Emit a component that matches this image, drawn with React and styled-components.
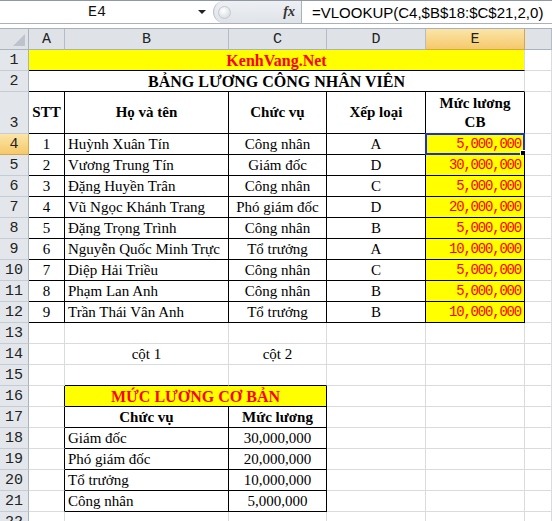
import styled, { createGlobalStyle } from "styled-components";

const GlobalStyle = createGlobalStyle`
  body {
    margin: 0;
    background: #fff;
    font-family: "Liberation Serif", serif;
    overflow: hidden;
  }
`;

const COLS = "29px 36px 164px 98px 99px 99px 1fr";
const GRID = "#d9dbde";

const Page = styled.div`
  width: 552px;
  height: 521px;
  overflow: hidden;
`;

const FormulaBar = styled.div`
  height: 24px;
  box-sizing: border-box;
  display: flex;
  align-items: stretch;
  border-top: 1px solid #8f98a3;
  border-bottom: 1px solid #a9b1bb;
  background: #fff;
`;

const NameBox = styled.div`
  width: 213px;
  display: flex;
  align-items: center;
  font-family: "Liberation Mono", monospace;
  font-size: 15px;
  color: #111;
`;

const NameText = styled.span`
  flex: 1;
  text-align: center;
  padding-right: 4px;
`;

const DropArrow = styled.span`
  width: 0;
  height: 0;
  margin-right: 7px;
  border-left: 4px solid transparent;
  border-right: 4px solid transparent;
  border-top: 4px solid #222;
`;

const FxZone = styled.div`
  width: 89px;
  display: flex;
  align-items: center;
  justify-content: flex-end;
  padding-right: 6px;
  box-sizing: border-box;
  background: linear-gradient(#eef0f3, #dfe3e8);
  border-radius: 12px 0 0 12px;
  border-right: 1px solid #a9b1bb;
  border-left: 1px solid #b9c0c8;
  position: relative;
`;

const Knob = styled.span`
  position: absolute;
  left: 4px;
  top: 5px;
  width: 11px;
  height: 11px;
  border-radius: 50%;
  background: radial-gradient(circle at 40% 35%, #fff, #cfd4da);
  border: 1px solid #c3c9d0;
`;

const Fx = styled.span`
  font-family: "Liberation Serif", serif;
  font-style: italic;
  font-weight: bold;
  font-size: 14px;
  color: #333;
`;

const Formula = styled.div`
  flex: 1;
  display: flex;
  align-items: center;
  padding-left: 10px;
  font-family: "Liberation Sans", sans-serif;
  font-size: 15px;
  color: #000;
  white-space: nowrap;
`;

const Strip = styled.div`
  height: 5px;
  box-sizing: border-box;
  background: #fff;
  border-bottom: 1px solid #a9b1bb;
`;

const Row = styled.div`
  display: grid;
  grid-template-columns: ${COLS};
  height: ${(p) => p.$h || 21}px;
`;

const Corner = styled.div`
  box-sizing: border-box;
  background: #dfe3e8;
  border-right: 1px solid #a9b3be;
  border-bottom: 1px solid #a9b3be;
  position: relative;
  &::after {
    content: "";
    position: absolute;
    right: 3px;
    bottom: 3px;
    border-left: 12px solid transparent;
    border-bottom: 12px solid #bcc3cb;
  }
`;

const ColHead = styled.div`
  box-sizing: border-box;
  display: flex;
  align-items: center;
  justify-content: center;
  font-family: "Liberation Mono", monospace;
  font-size: 15px;
  color: #222;
  background: ${(p) =>
    p.$sel ? "linear-gradient(#fbe5a8, #f5c96a)" : "#dfe3e8"};
  border-right: 1px solid ${(p) => (p.$sel ? "#d9a44e" : "#b4bdc7")};
  border-bottom: 1px solid ${(p) => (p.$sel ? "#d9a44e" : "#a9b3be")};
`;

const RowHead = styled.div`
  box-sizing: border-box;
  display: flex;
  align-items: flex-end;
  justify-content: center;
  padding-bottom: 1px;
  font-family: "Liberation Mono", monospace;
  font-size: 15px;
  color: #222;
  overflow: hidden;
  background: ${(p) =>
    p.$sel ? "linear-gradient(#fbe5a8, #f5c96a)" : "#e3e7ec"};
  border-right: 1px solid ${(p) => (p.$sel ? "#d9a44e" : "#a9b3be")};
  border-bottom: 1px solid ${(p) => (p.$sel ? "#d9a44e" : "#c5ccd4")};
`;

const Cell = styled.div`
  grid-column: span ${(p) => p.$span || 1};
  box-sizing: border-box;
  position: relative;
  display: flex;
  flex-direction: column;
  justify-content: center;
  align-items: ${(p) =>
    p.$align === "left" ? "flex-start" : p.$align === "right" ? "flex-end" : "center"};
  text-align: center;
  padding: 0 3px;
  white-space: nowrap;
  overflow: ${(p) => (p.$sel ? "visible" : "hidden")};
  font-family: ${(p) =>
    p.$mono ? '"Liberation Mono", monospace' : '"Liberation Serif", serif'};
  font-size: ${(p) => (p.$mono ? 14 : p.$title ? 16 : 15)}px;
  letter-spacing: ${(p) => (p.$mono ? "-1.2px" : "normal")};
  line-height: 19px;
  font-weight: ${(p) => (p.$bold ? "bold" : "normal")};
  color: ${(p) => (p.$red ? "#ff0000" : "#000")};
  background: ${(p) => (p.$yellow ? "#ffff00" : "#fff")};
  border-right: 1px solid ${(p) => (p.$br ? "#000" : GRID)};
  border-bottom: 1px solid ${(p) => (p.$bb ? "#000" : GRID)};
`;

const Selection = styled.div`
  position: absolute;
  left: -1px;
  top: -1px;
  right: -1px;
  bottom: -1px;
  border: 2px solid #1d2fd6;
  pointer-events: none;
  &::after {
    content: "";
    position: absolute;
    right: -4px;
    bottom: -4px;
    width: 5px;
    height: 5px;
    background: #000;
    border: 1px solid #fff;
  }
`;

const staff = [
  ["1", "Huỳnh Xuân Tín", "Công nhân", "A", "5,000,000"],
  ["2", "Vương Trung Tín", "Giám đốc", "D", "30,000,000"],
  ["3", "Đặng Huyền Trân", "Công nhân", "C", "5,000,000"],
  ["4", "Vũ Ngọc Khánh Trang", "Phó giám đốc", "D", "20,000,000"],
  ["5", "Đặng Trọng Trình", "Công nhân", "B", "5,000,000"],
  ["6", "Nguyễn Quốc Minh Trực", "Tổ trưởng", "A", "10,000,000"],
  ["7", "Diệp Hải Triều", "Công nhân", "C", "5,000,000"],
  ["8", "Phạm Lan Anh", "Công nhân", "B", "5,000,000"],
  ["9", "Trần Thái Vân Anh", "Tổ trưởng", "B", "10,000,000"],
];

const salary = [
  ["Giám đốc", "30,000,000"],
  ["Phó giám đốc", "20,000,000"],
  ["Tổ trưởng", "10,000,000"],
  ["Công nhân", "5,000,000"],
];

const Blank = ({ n = 1, ...rest }) =>
  Array.from({ length: n }, (_, i) => <Cell key={"b" + i} {...rest} />);

export default function App() {
  return (
    <Page>
      <GlobalStyle />
      <FormulaBar>
        <NameBox>
          <NameText>E4</NameText>
          <DropArrow />
        </NameBox>
        <FxZone>
          <Knob />
          <Fx>fx</Fx>
        </FxZone>
        <Formula>=VLOOKUP(C4,$B$18:$C$21,2,0)</Formula>
      </FormulaBar>
      <Strip />

      <Row>
        <Corner />
        {["A", "B", "C", "D", "E", "F"].map((c) => (
          <ColHead key={c} $sel={c === "E"}>
            {c === "F" ? "" : c}
          </ColHead>
        ))}
      </Row>

      <Row>
        <RowHead>1</RowHead>
        <Cell $span={5} $yellow $red $bold $title $bb>
          KenhVang.Net
        </Cell>
        <Cell />
      </Row>

      <Row>
        <RowHead>2</RowHead>
        <Cell $span={5} $bold $title $bb>
          BẢNG LƯƠNG CÔNG NHÂN VIÊN
        </Cell>
        <Cell />
      </Row>

      <Row $h={42}>
        <RowHead>3</RowHead>
        <Cell $bold $br $bb>STT</Cell>
        <Cell $bold $br $bb>Họ và tên</Cell>
        <Cell $bold $br $bb>Chức vụ</Cell>
        <Cell $bold $br $bb>Xếp loại</Cell>
        <Cell $bold $br $bb>
          <span>Mức lương</span>
          <span>CB</span>
        </Cell>
        <Cell />
      </Row>

      {staff.map((r, i) => (
        <Row key={r[0]}>
          <RowHead $sel={i === 0}>{i + 4}</RowHead>
          <Cell $br $bb>{r[0]}</Cell>
          <Cell $br $bb $align="left">{r[1]}</Cell>
          <Cell $br $bb>{r[2]}</Cell>
          <Cell $br $bb>{r[3]}</Cell>
          <Cell $br $bb $yellow $red $mono $align="right" $sel={i === 0}>
            {r[4]}
            {i === 0 && <Selection />}
          </Cell>
          <Cell />
        </Row>
      ))}

      <Row>
        <RowHead>13</RowHead>
        <Blank n={6} />
      </Row>

      <Row>
        <RowHead>14</RowHead>
        <Cell />
        <Cell>cột 1</Cell>
        <Cell>cột 2</Cell>
        <Blank n={3} />
      </Row>

      <Row>
        <RowHead>15</RowHead>
        <Cell />
        <Blank n={2} $bb />
        <Blank n={3} />
      </Row>

      <Row>
        <RowHead>16</RowHead>
        <Cell $br />
        <Cell $span={2} $yellow $red $bold $title $br $bb>
          MỨC LƯƠNG CƠ BẢN
        </Cell>
        <Blank n={3} />
      </Row>

      <Row>
        <RowHead>17</RowHead>
        <Cell $br />
        <Cell $bold $br $bb>Chức vụ</Cell>
        <Cell $bold $br $bb>Mức lương</Cell>
        <Blank n={3} />
      </Row>

      {salary.map((r, i) => (
        <Row key={r[0]}>
          <RowHead>{i + 18}</RowHead>
          <Cell $br />
          <Cell $br $bb $align="left">{r[0]}</Cell>
          <Cell $br $bb>{r[1]}</Cell>
          <Blank n={3} />
        </Row>
      ))}

      <Row>
        <RowHead>22</RowHead>
        <Blank n={6} />
      </Row>
    </Page>
  );
}
